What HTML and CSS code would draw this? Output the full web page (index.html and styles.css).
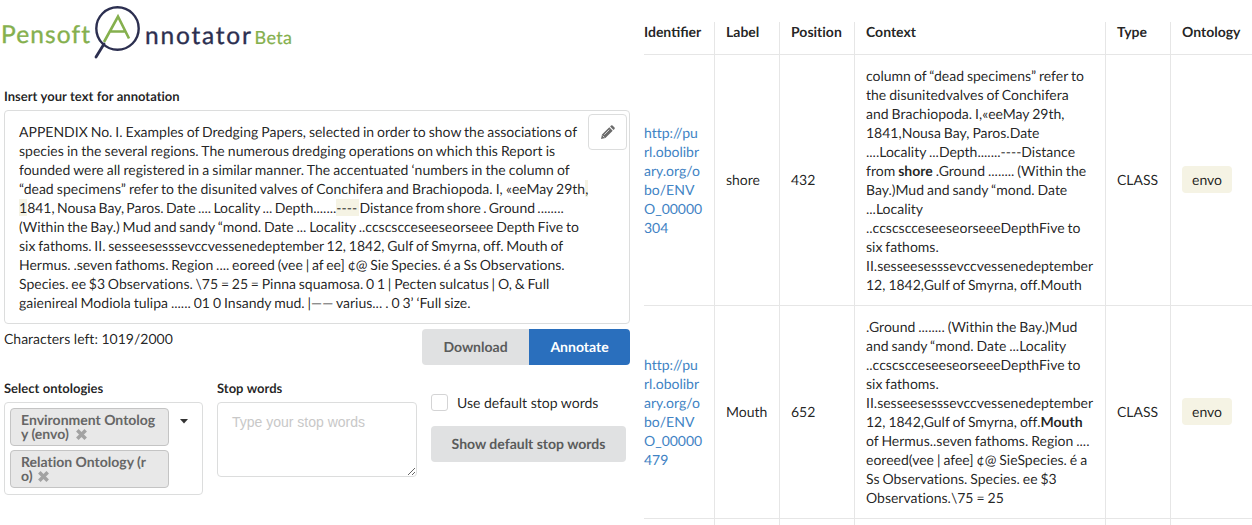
FILE: index.html
```html
<!DOCTYPE html>
<html lang="en">
<head>
<meta charset="utf-8">
<title>Pensoft Annotator</title>
<link rel="stylesheet" href="styles.css">
</head>
<body>
<main class="page">
  <section class="editor">
    <svg class="logo" width="300" height="64" viewBox="0 0 300 64" role="img" aria-label="Pensoft Annotator Beta">
      <text class="logo-pensoft" x="1" y="43" textLength="89">Pensoft</text>
      <path d="M104 42 118 16.500l11 22M109.500 31.500h15.500" fill="none" stroke="#85b04e" stroke-width="2.600"/>
      <circle cx="117.500" cy="28.500" r="21.200" fill="none" stroke="#2c2f50" stroke-width="2.400"/>
      <path d="M104 44 96 57" stroke="#2c2f50" stroke-width="2.800" stroke-linecap="round"/>
      <text class="logo-annotator" x="145" y="43.500" textLength="106">nnotator</text>
      <text class="logo-beta" x="254.500" y="44" textLength="37.500">Beta</text>
    </svg>
    <label class="label">Insert your text for annotation</label>
    <div class="textbox">
      <p class="source"><span class="snug">APPENDIX No. I. Examples of Dredging Papers, selected in order to show the associations of</span><br>species in the several regions. The numerous dredging operations on which this Report is<br>founded were all registered in a similar manner. The accentuated ‘numbers in the column of<br>“dead specimens” refer to the disunited valves of Conchifera and Brachiopoda. I, «eeMay 29th<mark>,</mark><br><span class="tightest"><mark>1</mark>841, Nousa Bay, Paros. Date .... Locality ... Depth.......<mark>---- </mark>Distance from shore . Ground ........</span><br><span class="tight">(Within the Bay.) Mud and sandy “mond. Date ... Locality ..ccscscceseeseorseee Depth Five to</span><br><span class="tight">six fathoms. II. sesseesesssevccvessenedeptember 12, 1842, Gulf of Smyrna, off. Mouth of</span><br><span class="tight">Hermus. .seven fathoms. Region .... eoreed (vee | af ee] ¢@ Sie Species. é a Ss Observations.</span><br><span class="tight">Species. ee $3 Observations. \75 = 25 = Pinna squamosa. 0 1 | Pecten sulcatus | O, &amp; Full</span><br><span class="snug">gaienireal Modiola tulipa ...... 01 0 Insandy mud. |—— varius... . 0 3’ ‘Full size.</span></p>
      <button class="edit" aria-label="Edit">
        <svg width="14" height="14" viewBox="0 0 14 14" fill="#6b6b6b"><path d="M0 14 1 9.600 8.300 2.300 11.700 5.700 4.400 13ZM9.100 1.500 10.100.5Q10.800-.1 11.500.5L13.500 2.500Q14.100 3.200 13.500 3.900L12.500 4.900Z"/><path d="M1.600 10.600 3.400 12.400M3.300 9.700 8.300 4.700" stroke="#fff" stroke-width=".7"/></svg>
      </button>
    </div>
    <div class="actions">
      <span class="count">Characters left: 1019/2000</span>
      <div class="buttons"><button class="btn download">Download</button><button class="btn annotate">Annotate</button></div>
    </div>
    <div class="options">
      <div class="field ontologies">
        <label class="label">Select ontologies</label>
        <div class="select">
          <div class="tags">
            <div class="tag">Environment Ontolog<br>y (envo)<svg class="close" width="11" height="11" viewBox="0 0 10 10"><path d="M1.200 1.200 8.800 8.800M8.800 1.200 1.200 8.800"/></svg></div>
            <div class="tag">Relation Ontology (r<br>o)<svg class="close near" width="11" height="11" viewBox="0 0 10 10"><path d="M1.200 1.200 8.800 8.800M8.800 1.200 1.200 8.800"/></svg></div>
          </div>
          <svg class="caret" width="8" height="5" viewBox="0 0 8 5"><path d="M0 0h8L4 4.500Z" fill="#333"/></svg>
        </div>
      </div>
      <div class="field stops">
        <label class="label">Stop words</label>
        <textarea class="stop-input" placeholder="Type your stop words"></textarea>
      </div>
      <div class="defaults">
        <div class="check"><span class="checkbox"></span>Use default stop words</div>
        <button class="btn show">Show default stop words</button>
      </div>
    </div>
  </section>
  <table class="results">
    <colgroup><col class="c-id"><col class="c-label"><col class="c-pos"><col class="c-context"><col class="c-type"><col class="c-onto"></colgroup>
    <thead><tr><th class="with-fi">Identifier</th><th>Label</th><th>Position</th><th>Context</th><th>Type</th><th>Ontology</th></tr></thead>
    <tbody>
      <tr>
        <td><a class="link">http://pu<br>rl.obolibr<br>ary.org/o<br>bo/ENV<br>O_00000<br>304</a></td>
        <td class="mid">shore</td><td class="mid">432</td>
        <td class="snug">column of “dead specimens” refer to<br>the disunitedvalves of Conchifera<br>and Brachiopoda. I,«eeMay 29th,<br>1841,Nousa Bay, Paros.Date<br>....Locality ...Depth.......----Distance<br>from <b>shore</b> .Ground ........ (Within the<br>Bay.)Mud and sandy “mond. Date<br>...Locality<br>..ccscscceseeseorseeeDepthFive to<br>six fathoms.<br>II.sesseesesssevccvessenedeptember<br>12, 1842,Gulf of Smyrna, off.Mouth</td>
        <td class="mid">CLASS</td><td class="mid"><span class="badge">envo</span></td>
      </tr>
      <tr>
        <td><a class="link">http://pu<br>rl.obolibr<br>ary.org/o<br>bo/ENV<br>O_00000<br>479</a></td>
        <td class="mid">Mouth</td><td class="mid">652</td>
        <td class="snug">.Ground ........ (Within the Bay.)Mud<br>and sandy “mond. Date ...Locality<br>..ccscscceseeseorseeeDepthFive to<br>six fathoms.<br>II.sesseesesssevccvessenedeptember<br>12, 1842,Gulf of Smyrna, off.<b>Mouth</b><br>of Hermus..seven fathoms. Region ....<br>eoreed(vee | afee] ¢@ SieSpecies. é a<br>Ss Observations. Species. ee $3<br>Observations.\75 = 25</td>
        <td class="mid">CLASS</td><td class="mid"><span class="badge">envo</span></td>
      </tr>
      <tr class="next"><td></td><td></td><td></td><td></td><td></td><td></td></tr>
    </tbody>
  </table>
</main>
</body>
</html>
```
FILE: styles.css
```css
* { box-sizing: border-box; }
body { margin: 0; background: #fff; color: rgba(0, 0, 0, .87); font: 14px/19px Lato, "Liberation Sans", sans-serif; text-rendering: geometricPrecision; font-variant-ligatures: none; }
button { font: inherit; border: 0; margin: 0; padding: 0; text-rendering: inherit; }
.page { display: flex; width: 1252px; height: 525px; overflow: hidden; }
.editor { width: 644px; padding-left: 4px; flex: none; }

.logo { display: block; margin-left: -4px; }
.logo-pensoft, .logo-annotator, .logo-beta { font-family: Lato, sans-serif; }
.logo-pensoft { font-size: 24.5px; fill: #85b04e; stroke: #85b04e; stroke-width: .35px; }
.logo-annotator { font-size: 24.5px; fill: #2c2f50; stroke: #2c2f50; stroke-width: .35px; }
.logo-beta { font-size: 18px; fill: #85b04e; stroke: #85b04e; stroke-width: .2px; }

.label { display: block; font-size: 13px; font-weight: 700; line-height: 17px; word-spacing: .3px; }
.editor > .label { margin-top: 24px; }
.textbox { position: relative; width: 626px; height: 214px; margin-top: 5px; padding: 11px 14px; border: 1px solid #dcdddd; border-radius: 4px; }
.source { margin: 0; white-space: nowrap; word-spacing: -.45px; }
.snug { word-spacing: -.62px; }
.tight { word-spacing: -.8px; }
.tightest { word-spacing: -1.3px; }
mark { background: #f5f3e4; color: inherit; }
.edit { position: absolute; top: 3px; right: 2px; width: 39px; height: 36px; display: flex; align-items: center; justify-content: center; background: #fff; border: 1px solid #dcdddd; border-radius: 4px; }

.actions { display: flex; justify-content: space-between; width: 626px; margin-top: 5px; }
.buttons { display: flex; }
.btn { height: 36px; padding-bottom: 2px; background: #e0e1e2; color: #5a5b5b; font-weight: 700; border-radius: 4px; white-space: nowrap; }
.download { width: 107px; border-radius: 4px 0 0 4px; }
.annotate { width: 101px; background: #2a6fbd; color: #fff; border-radius: 0 4px 4px 0; }

.options { display: flex; margin-top: 15px; }
.ontologies { width: 199px; margin-right: 14px; }
.stops { width: 200px; margin-right: 14px; }
.select { display: flex; margin-top: 5px; height: 93px; border: 1px solid #dcdddd; border-radius: 4px; padding: 5px; }
.tags { display: flex; flex-direction: column; gap: 4px; }
.tag { width: 159px; height: 38px; padding: 4px 10px; border: 1px solid #c4c4c4; border-radius: 4px; background: #e8e8e8; color: #666; font-weight: 700; line-height: 14px; white-space: nowrap; }
.close { margin-left: 7px; vertical-align: -1px; }
.close.near { margin-left: 6px; }
.close path { stroke: #a2a2a2; stroke-width: 3.2; }
.caret { margin: 11px 0 0 11px; }
.stop-input { display: block; width: 200px; height: 75px; margin-top: 5px; padding: 11px 14px; border: 1px solid #dcdddd; border-radius: 4px; font: 14px/17px "Liberation Sans", Arial, sans-serif; resize: vertical; }
.stop-input::placeholder { color: #c8c8c8; }
.defaults { padding-top: 13px; }
.check { display: flex; align-items: center; gap: 9px; }
.checkbox { width: 17px; height: 17px; border: 1px solid #d4d4d5; border-radius: 3px; }
.show { width: 195px; margin-top: 14px; }

.results { flex: none; width: 608px; height: 0; margin-top: 22px; table-layout: fixed; border-collapse: separate; border-spacing: 0; }
.c-id { width: 71px; }
.c-label { width: 65px; }
.c-pos { width: 75px; }
.c-context { width: 251px; }
.c-type { width: 65px; }
.c-onto { width: 81px; }
th, td { text-align: left; white-space: nowrap; border-bottom: 1px solid #e6e6e6; border-right: 1px solid #e6e6e6; padding: 11px; }
th { padding: 0 11px 13px; }
.with-fi { font-variant-ligatures: normal; }
.mid { padding-bottom: 13px; }
th:first-child, td:first-child { padding-left: 0; }
th:last-child, td:last-child { border-right: 0; padding-right: 0; }
.next td { height: 40px; }
.link { color: #4183c4; }
.badge { display: inline-block; padding: 4px 10px; border-radius: 4px; background: #f5f3e4; }
```
